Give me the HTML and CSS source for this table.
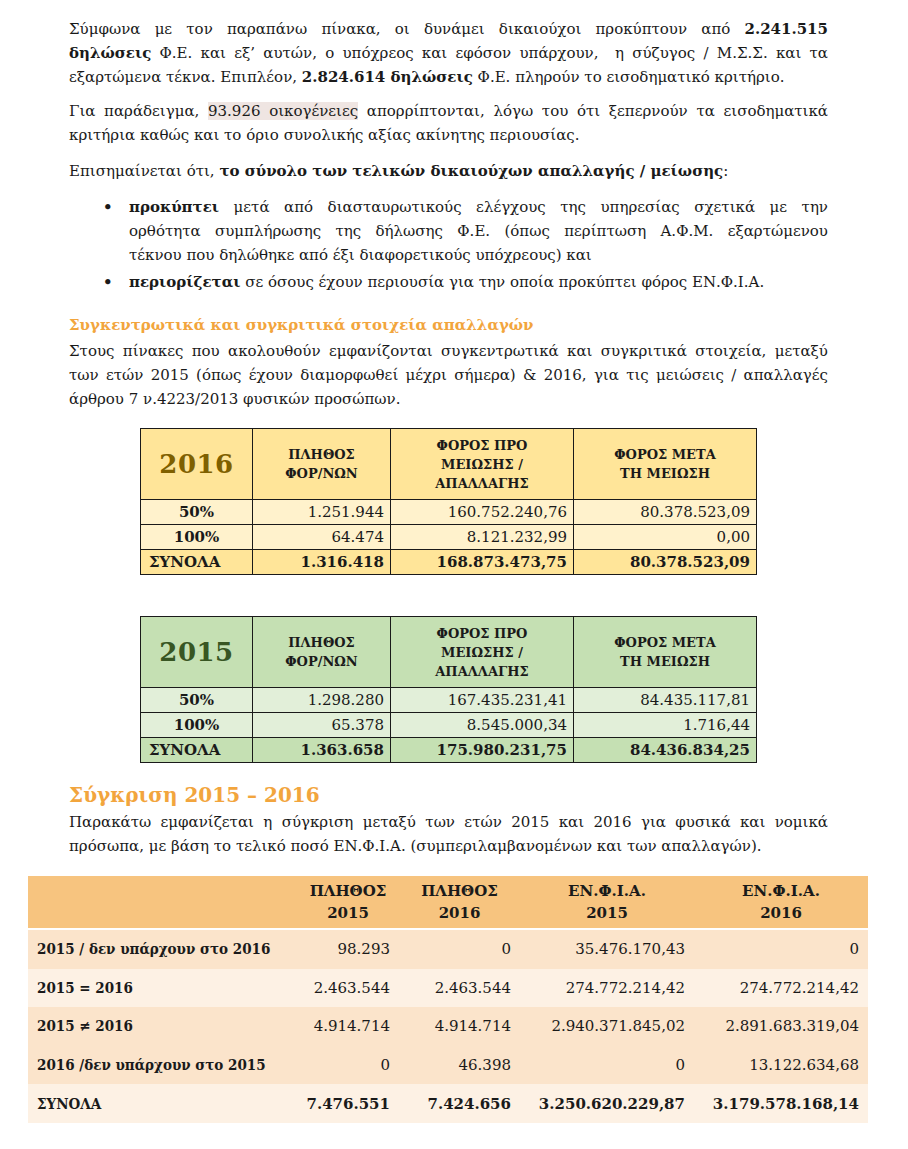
FILE: index.html
```html
<!DOCTYPE html>
<html lang="el">
<head>
<meta charset="utf-8">
<title>Σύγκριση</title>
<link rel="stylesheet" href="styles.css">
</head>
<body>
<main class="page">
  <p class="para">
    <span class="ln">Σύμφωνα με τον παραπάνω πίνακα, οι δυνάμει δικαιούχοι προκύπτουν από <b>2.241.515</b></span>
    <span class="ln"><b>δηλώσεις</b> Φ.Ε. και εξ’ αυτών, ο υπόχρεος και εφόσον υπάρχουν,&nbsp; η σύζυγος / Μ.Σ.Σ. και τα</span>
    <span class="end">εξαρτώμενα τέκνα. Επιπλέον, <b>2.824.614 δηλώσεις</b> Φ.Ε. πληρούν το εισοδηματικό κριτήριο.</span>
  </p>
  <p class="para">
    <span class="ln">Για παράδειγμα, <span class="hl">93.926 οικογένειες</span> απορρίπτονται, λόγω του ότι ξεπερνούν τα εισοδηματικά</span>
    <span class="end">κριτήρια καθώς και το όριο συνολικής αξίας ακίνητης περιουσίας.</span>
  </p>
  <p class="para lead">Επισημαίνεται ότι, <b>το σύνολο των τελικών δικαιούχων απαλλαγής / μείωσης</b>:</p>
  <ul class="bullets">
    <li>
      <span class="ln"><b>προκύπτει</b> μετά από διασταυρωτικούς ελέγχους της υπηρεσίας σχετικά με την</span>
      <span class="ln">ορθότητα συμπλήρωσης της δήλωσης Φ.Ε. (όπως περίπτωση Α.Φ.Μ. εξαρτώμενου</span>
      <span class="end">τέκνου που δηλώθηκε από έξι διαφορετικούς υπόχρεους) και</span>
    </li>
    <li><b>περιορίζεται</b> σε όσους έχουν περιουσία για την οποία προκύπτει φόρος ΕΝ.Φ.Ι.Α.</li>
  </ul>

  <h2 class="sub">Συγκεντρωτικά και συγκριτικά στοιχεία απαλλαγών</h2>
  <p class="para tight">
    <span class="ln">Στους πίνακες που ακολουθούν εμφανίζονται συγκεντρωτικά και συγκριτικά στοιχεία, μεταξύ</span>
    <span class="ln">των ετών 2015 (όπως έχουν διαμορφωθεί μέχρι σήμερα) &amp; 2016, για τις μειώσεις / απαλλαγές</span>
    <span class="end">άρθρου 7 ν.4223/2013 φυσικών προσώπων.</span>
  </p>

  <table class="yt y2016">
    <colgroup><col class="c1"><col class="c2"><col class="c3"><col class="c4"></colgroup>
    <tr class="head">
      <th class="year">2016</th>
      <th>ΠΛΗΘΟΣ<br>ΦΟΡ/ΝΩΝ</th>
      <th>ΦΟΡΟΣ ΠΡΟ<br>ΜΕΙΩΣΗΣ /<br>ΑΠΑΛΛΑΓΗΣ</th>
      <th>ΦΟΡΟΣ ΜΕΤΑ<br>ΤΗ ΜΕΙΩΣΗ</th>
    </tr>
    <tr class="r">
      <th>50%</th><td>1.251.944</td><td>160.752.240,76</td><td>80.378.523,09</td>
    </tr>
    <tr class="r">
      <th>100%</th><td>64.474</td><td>8.121.232,99</td><td>0,00</td>
    </tr>
    <tr class="tot">
      <th>ΣΥΝΟΛΑ</th><td>1.316.418</td><td>168.873.473,75</td><td>80.378.523,09</td>
    </tr>
  </table>

  <table class="yt y2015">
    <colgroup><col class="c1"><col class="c2"><col class="c3"><col class="c4"></colgroup>
    <tr class="head">
      <th class="year">2015</th>
      <th>ΠΛΗΘΟΣ<br>ΦΟΡ/ΝΩΝ</th>
      <th>ΦΟΡΟΣ ΠΡΟ<br>ΜΕΙΩΣΗΣ /<br>ΑΠΑΛΛΑΓΗΣ</th>
      <th>ΦΟΡΟΣ ΜΕΤΑ<br>ΤΗ ΜΕΙΩΣΗ</th>
    </tr>
    <tr class="r">
      <th>50%</th><td>1.298.280</td><td>167.435.231,41</td><td>84.435.117,81</td>
    </tr>
    <tr class="r">
      <th>100%</th><td>65.378</td><td>8.545.000,34</td><td>1.716,44</td>
    </tr>
    <tr class="tot">
      <th>ΣΥΝΟΛΑ</th><td>1.363.658</td><td>175.980.231,75</td><td>84.436.834,25</td>
    </tr>
  </table>

  <h2 class="big">Σύγκριση 2015 – 2016</h2>
  <p class="para tight">
    <span class="ln">Παρακάτω εμφανίζεται η σύγκριση μεταξύ των ετών 2015 και 2016 για φυσικά και νομικά</span>
    <span class="end">πρόσωπα, με βάση το τελικό ποσό ΕΝ.Φ.Ι.Α. (συμπεριλαμβανομένων και των απαλλαγών).</span>
  </p>
</main>

<table class="cmp">
  <colgroup><col class="k1"><col class="k2"><col class="k3"><col class="k4"><col class="k5"></colgroup>
  <tr class="head">
    <th></th>
    <th>ΠΛΗΘΟΣ<br>2015</th>
    <th>ΠΛΗΘΟΣ<br>2016</th>
    <th>ΕΝ.Φ.Ι.Α.<br>2015</th>
    <th>ΕΝ.Φ.Ι.Α.<br>2016</th>
  </tr>
  <tr class="dk">
    <th>2015 / δεν υπάρχουν στο 2016</th><td>98.293</td><td>0</td><td>35.476.170,43</td><td>0</td>
  </tr>
  <tr class="lt">
    <th>2015 = 2016</th><td>2.463.544</td><td>2.463.544</td><td>274.772.214,42</td><td>274.772.214,42</td>
  </tr>
  <tr class="dk">
    <th>2015 ≠ 2016</th><td>4.914.714</td><td>4.914.714</td><td>2.940.371.845,02</td><td>2.891.683.319,04</td>
  </tr>
  <tr class="dk">
    <th>2016 /δεν υπάρχουν στο 2015</th><td>0</td><td>46.398</td><td>0</td><td>13.122.634,68</td>
  </tr>
  <tr class="lt sum">
    <th>ΣΥΝΟΛΑ</th><td>7.476.551</td><td>7.424.656</td><td>3.250.620.229,87</td><td>3.179.578.168,14</td>
  </tr>
</table>
</body>
</html>
```
FILE: styles.css
```css
html, body {
  margin: 0;
  padding: 0;
  background: #ffffff;
}
body {
  font-family: "DejaVu Serif", "Liberation Serif", serif;
  color: #1a1a1a;
  font-size: 15px;
  padding-top: 17px;
}
.page {
  width: 759px;
  margin-left: 69px;
}
.para {
  margin: 0 0 10px 0;
  line-height: 24px;
  text-align: justify;
}
.para.lead { margin-top: 12px; }
.para.tight { margin-bottom: 0; }
.ln {
  display: block;
  text-align: justify;
  text-align-last: justify;
}
.end {
  display: block;
  text-align: left;
}
.hl { background: #efe5e2; }
.bullets {
  margin: 12px 0 0 0;
  padding: 0 0 0 60px;
  list-style: none;
}
.bullets li {
  position: relative;
  line-height: 24px;
  text-align: justify;
  margin-bottom: 3px;
}
.bullets li::before {
  content: "•";
  position: absolute;
  left: -26px;
  top: 0;
  font-weight: bold;
}
.sub {
  margin: 19px 0 2px 0;
  font-size: 15px;
  line-height: 24px;
  color: #f2a53d;
  font-weight: bold;
}
.big {
  margin: 17px 0 0 0;
  font-size: 20px;
  line-height: 30px;
  color: #f2a53d;
  font-weight: bold;
}
.yt {
  border-collapse: collapse;
  width: 617px;
  margin: 17px auto 0 auto;
  table-layout: fixed;
}
.yt + .yt { margin-top: 41px; }
.yt .c1 { width: 112px; }
.yt .c2 { width: 138px; }
.yt .c3 { width: 183px; }
.yt .c4 { width: 183px; }
.yt th, .yt td {
  border: 1.5px solid #1a1a1a;
  padding: 0 6px;
  height: 24px;
  line-height: 22px;
  font-size: 15px;
}
.yt td { text-align: right; }
.yt th { text-align: center; font-weight: bold; }
.yt .head th {
  height: 70px;
  font-size: 13px;
  line-height: 19px;
}
.yt .head th.year {
  font-size: 26px;
  letter-spacing: 0.5px;
}
.yt .tot td { font-weight: bold; }
.yt .tot th { text-align: left; padding-left: 8px; }
.y2016 .head th { background: #ffe599; }
.y2016 .r th, .y2016 .r td { background: #fff2cc; }
.y2016 .tot th, .y2016 .tot td { background: #ffe599; }
.y2016 .year { color: #7f6000; }
.y2015 .head th { background: #c5e0b3; }
.y2015 .r th, .y2015 .r td { background: #e2efd9; }
.y2015 .tot th, .y2015 .tot td { background: #c5e0b3; }
.y2015 .year { color: #385623; }

.cmp {
  border-collapse: collapse;
  width: 840px;
  margin: 18px 0 0 28px;
  table-layout: fixed;
}
.cmp .k1 { width: 269px; }
.cmp .k2 { width: 102px; }
.cmp .k3 { width: 121px; }
.cmp .k4 { width: 174px; }
.cmp .k5 { width: 174px; }
.cmp th, .cmp td {
  padding: 0 9px;
  height: 38.6px;
  font-size: 15px;
  line-height: 22px;
}
.cmp td { text-align: right; }
.cmp tr > th:first-child {
  text-align: left;
  font-weight: bold;
  white-space: nowrap;
  padding-right: 0;
  font-family: "DejaVu Serif Condensed", "DejaVu Serif", serif;
  font-stretch: condensed;
  font-size: 15px;
}
.cmp .head th {
  background: #f7c47f;
  height: 52px;
  text-align: center;
  font-weight: bold;
  border-bottom: 2px solid #ffffff;
}
.cmp .dk th, .cmp .dk td { background: #fbe4cb; }
.cmp .lt th, .cmp .lt td { background: #fdf1e4; }
.cmp .sum td { font-weight: bold; }
```
